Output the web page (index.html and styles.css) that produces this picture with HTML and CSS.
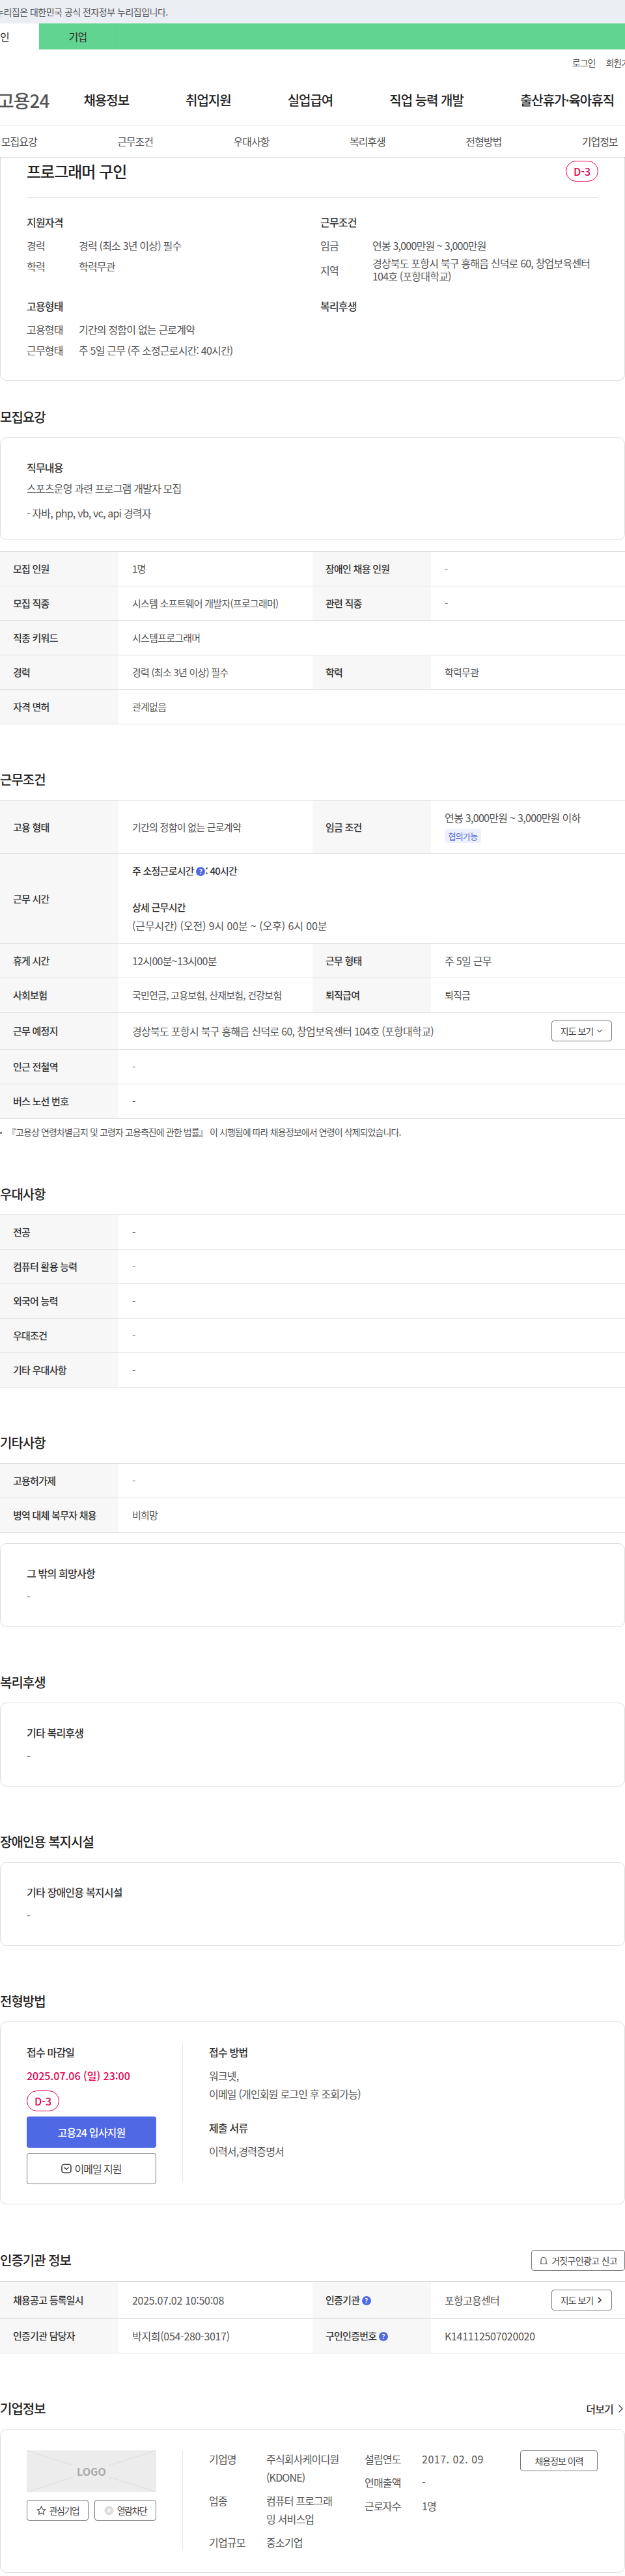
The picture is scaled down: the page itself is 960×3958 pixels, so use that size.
FILE: index.html
```html
<!DOCTYPE html>
<html lang="ko">
<head>
    <meta charset="UTF-8">
    <meta name="viewport" content="width=device-width, initial-scale=1.0">
    <title>프로그래머 구인 - 고용24</title>
    <link rel="stylesheet" href="styles.css">
</head>
<body>
    <div class="gov-bar">누리집은 대한민국 공식 전자정부 누리집입니다.</div>
    <div class="member-tabs">
        <a class="member-tab active">개인</a>
        <a class="member-tab">기업</a>
    </div>
    <div class="util-menu">
        <a>로그인</a>
        <a>회원가입</a>
    </div>
    <header class="main-nav">
        <div class="logo">고용24</div>
        <a>채용정보</a>
        <a>취업지원</a>
        <a>실업급여</a>
        <a>직업 능력 개발</a>
        <a>출산휴가·육아휴직</a>
    </header>
    <nav class="sub-nav">
        <a>모집요강</a>
        <a>근무조건</a>
        <a>우대사항</a>
        <a>복리후생</a>
        <a>전형방법</a>
        <a>기업정보</a>
    </nav>

    <div class="card summary-card">
        <div class="summary-head">
            <h1>프로그래머 구인</h1>
            <span class="d-day">D-3</span>
        </div>
        <div class="summary-grid">
            <div>
                <h3>지원자격</h3>
                <dl class="summary-list">
                    <dt>경력</dt><dd>경력 (최소 3년 이상) 필수</dd>
                    <dt>학력</dt><dd>학력무관</dd>
                </dl>
            </div>
            <div>
                <h3>근무조건</h3>
                <dl class="summary-list">
                    <dt>임금</dt><dd>연봉 3,000만원 ~ 3,000만원</dd>
                    <dt>지역</dt><dd class="two-line">경상북도 포항시 북구 흥해읍 신덕로 60, 창업보육센터 104호 (포항대학교)</dd>
                </dl>
            </div>
            <div>
                <h3>고용형태</h3>
                <dl class="summary-list">
                    <dt>고용형태</dt><dd>기간의 정함이 없는 근로계약</dd>
                    <dt>근무형태</dt><dd>주 5일 근무 (주 소정근로시간: 40시간)</dd>
                </dl>
            </div>
            <div>
                <h3>복리후생</h3>
            </div>
        </div>
    </div>

    <section class="section first">
        <h2>모집요강</h2>
        <div class="card text-card job-card">
            <h3>직무내용</h3>
            <p>스포츠운영 과련 프로그램 개발자 모집</p>
            <p class="spaced">- 자바, php, vb, vc, api 경력자</p>
        </div>
        <table class="info-table">
            <colgroup><col class="col-th"><col class="col-td"><col class="col-th"><col class="col-td"></colgroup>
            <tr><th>모집 인원</th><td>1명</td><th>장애인 채용 인원</th><td>-</td></tr>
            <tr><th>모집 직종</th><td>시스템 소프트웨어 개발자(프로그래머)</td><th>관련 직종</th><td>-</td></tr>
            <tr><th>직종 키워드</th><td colspan="3">시스템프로그래머</td></tr>
            <tr><th>경력</th><td>경력 (최소 3년 이상) 필수</td><th>학력</th><td>학력무관</td></tr>
            <tr><th>자격 면허</th><td colspan="3">관계없음</td></tr>
        </table>
    </section>

    <section class="section">
        <h2>근무조건</h2>
        <table class="info-table">
            <colgroup><col class="col-th"><col class="col-td"><col class="col-th"><col class="col-td"></colgroup>
            <tr>
                <th>고용 형태</th><td>기간의 정함이 없는 근로계약</td>
                <th>임금 조건</th>
                <td class="wide">연봉 3,000만원 ~ 3,000만원 이하<span class="tag">협의가능</span></td>
            </tr>
            <tr>
                <th>근무 시간</th>
                <td colspan="3">
                    <strong>주 소정근로시간 <span class="help">?</span>: 40시간</strong><br>
                    <br>
                    <strong>상세 근무시간</strong><br>
                    <span class="work-hours">(근무시간) (오전) 9시 00분 ~ (오후) 6시 00분</span>
                </td>
            </tr>
            <tr><th>휴게 시간</th><td class="wide">12시00분~13시00분</td><th>근무 형태</th><td class="wide">주 5일 근무</td></tr>
            <tr><th>사회보험</th><td>국민연금, 고용보험, 산재보험, 건강보험</td><th>퇴직급여</th><td>퇴직금</td></tr>
            <tr>
                <th>근무 예정지</th>
                <td colspan="3" class="wide">
                    <div class="cell-flex">
                        <span>경상북도 포항시 북구 흥해읍 신덕로 60, 창업보육센터 104호 (포항대학교)</span>
                        <a class="btn-small">지도 보기
                            <svg width="10" height="10" viewBox="0 0 10 10"><path d="M1.5 3.2 5 6.8l3.5-3.6" fill="none" stroke="#444" stroke-width="1.1"/></svg>
                        </a>
                    </div>
                </td>
            </tr>
            <tr><th>인근 전철역</th><td colspan="3">-</td></tr>
            <tr><th>버스 노선 번호</th><td colspan="3">-</td></tr>
        </table>
        <p class="note">『고용상 연령차별금지 및 고령자 고용촉진에 관한 법률』 이 시행됨에 따라 채용정보에서 연령이 삭제되었습니다.</p>
    </section>

    <section class="section">
        <h2>우대사항</h2>
        <table class="info-table">
            <colgroup><col class="col-th"><col></colgroup>
            <tr><th>전공</th><td>-</td></tr>
            <tr><th>컴퓨터 활용 능력</th><td>-</td></tr>
            <tr><th>외국어 능력</th><td>-</td></tr>
            <tr><th>우대조건</th><td>-</td></tr>
            <tr><th>기타 우대사항</th><td>-</td></tr>
        </table>
    </section>

    <section class="section">
        <h2>기타사항</h2>
        <table class="info-table">
            <colgroup><col class="col-th"><col></colgroup>
            <tr><th>고용허가제</th><td>-</td></tr>
            <tr><th>병역 대체 복무자 채용</th><td>비희망</td></tr>
        </table>
        <div class="card text-card">
            <h3>그 밖의 희망사항</h3>
            <p>-</p>
        </div>
    </section>

    <section class="section">
        <h2>복리후생</h2>
        <div class="card text-card no-gap">
            <h3>기타 복리후생</h3>
            <p>-</p>
        </div>
    </section>

    <section class="section">
        <h2>장애인용 복지시설</h2>
        <div class="card text-card no-gap">
            <h3>기타 장애인용 복지시설</h3>
            <p>-</p>
        </div>
    </section>

    <section class="section">
        <h2>전형방법</h2>
        <div class="card split-card">
            <div class="split-left">
                <h3>접수 마감일</h3>
                <div class="deadline">2025.07.06 (일) 23:00</div>
                <div><span class="d-day">D-3</span></div>
                <a class="btn-apply">고용24 입사지원</a>
                <a class="btn-mail">
                    <svg width="16" height="16" viewBox="0 0 16 16"><rect x="1" y="1.5" width="14" height="13" rx="3.5" fill="none" stroke="#333" stroke-width="1.5"/><path d="M4.6 6.2 8 9.2l3.4-3" fill="none" stroke="#333" stroke-width="1.5"/></svg>
                    이메일 지원
                </a>
            </div>
            <div class="split-right">
                <h3>접수 방법</h3>
                <p class="first-line">워크넷,</p>
                <p>이메일 (개인회원 로그인 후 조회가능)</p>
                <h3 class="second-head">제출 서류</h3>
                <p class="first-line">이력서,경력증명서</p>
            </div>
        </div>
    </section>

    <section class="section">
        <div class="section-head">
            <h2>인증기관 정보</h2>
            <a class="btn-report">
                <svg width="14" height="14" viewBox="0 0 14 14"><path d="M3 12V6.5a4 4 0 0 1 8 0V12M1 12.5h12" fill="none" stroke="#444" stroke-width="1.1"/></svg>
                거짓구인광고 신고
            </a>
        </div>
        <table class="info-table">
            <colgroup><col class="col-th"><col class="col-td"><col class="col-th"><col class="col-td"></colgroup>
            <tr>
                <th>채용공고 등록일시</th><td class="wide digits">2025.07.02 10:50:08</td>
                <th>인증기관 <span class="help">?</span></th>
                <td class="wide">
                    <div class="cell-flex">
                        <span>포항고용센터</span>
                        <a class="btn-small">지도 보기
                            <svg width="10" height="10" viewBox="0 0 10 10"><path d="M3 1.2 7 5 3 8.8" fill="none" stroke="#333" stroke-width="1.6"/></svg>
                        </a>
                    </div>
                </td>
            </tr>
            <tr>
                <th>인증기관 담당자</th><td class="wide digits">박지희(054-280-3017)</td>
                <th>구인인증번호 <span class="help">?</span></th><td class="wide digits">K141112507020020</td>
            </tr>
        </table>
    </section>

    <section class="section">
        <div class="section-head company-head">
            <h2>기업정보</h2>
            <a class="more">더보기
                <svg width="10" height="14" viewBox="0 0 10 14"><path d="M2.5 1.5 8 7l-5.5 5.5" fill="none" stroke="#333" stroke-width="1.2"/></svg>
            </a>
        </div>
        <div class="card split-card company-card">
            <div class="split-left">
                <div class="logo-box">
                    <svg class="logo-lines" width="199" height="64" viewBox="0 0 199 64"><path d="M0 0 72 23M199 0 127 23M0 64 72 41M199 64 127 41" stroke="#dcdcdc" fill="none"/></svg>
                    <span>LOGO</span>
                </div>
                <div class="company-btns">
                    <a class="btn-small">
                        <svg width="15" height="15" viewBox="0 0 15 15"><path d="m7.5 1.3 1.9 4 4.3.6-3.1 3 .8 4.4-3.9-2.1-3.9 2.1.8-4.4-3.1-3 4.3-.6z" fill="none" stroke="#444" stroke-width="1.1"/></svg>
                        관심기업
                    </a>
                    <a class="btn-small">
                        <svg width="15" height="15" viewBox="0 0 15 15"><circle cx="7.5" cy="7.5" r="7" fill="#ddd"/><path d="m5 5 5 5m0-5-5 5" stroke="#fff" stroke-width="1.2"/></svg>
                        열람차단
                    </a>
                </div>
            </div>
            <div class="split-right company-info">
                <dl class="company-list">
                    <dt>기업명</dt><dd>주식회사케이디원(KDONE)</dd>
                    <dt>업종</dt><dd>컴퓨터 프로그래밍 서비스업</dd>
                    <dt>기업규모</dt><dd>중소기업</dd>
                </dl>
                <dl class="company-list side">
                    <dt>설립연도</dt><dd class="founded">2017. 02. 09</dd>
                    <dt>연매출액</dt><dd>-</dd>
                    <dt>근로자수</dt><dd>1명</dd>
                </dl>
                <a class="btn-small btn-history">채용정보 이력</a>
            </div>
        </div>
    </section>
</body>
</html>
```

FILE: styles.css
```css
html, body {
    overflow-x: hidden;
}
body {
    margin: 0;
    width: 960px;
    font-family: "Noto Sans CJK KR", "Noto Sans", sans-serif;
    font-size: 16px;
    line-height: 28px;
    letter-spacing: -0.8px;
    color: #555;
    background-color: #fff;
}
h1, h2, h3, p, dl, dd {
    margin: 0;
}
a {
    color: inherit;
    text-decoration: none;
}

/* top bars */
.gov-bar {
    height: 36px;
    line-height: 36px;
    text-indent: -7px;
    font-size: 14px;
    letter-spacing: -0.5px;
    background-color: #ebeef3;
}
.member-tabs {
    display: flex;
    height: 40px;
    background-color: #62d491;
}
.member-tab {
    width: 119px;
    line-height: 40px;
    text-align: center;
    color: #333;
    border-right: 1px solid #58c986;
}
.member-tab.active {
    margin-left: -60px;
    background-color: #fff;
    border-right: none;
    width: 120px;
}
.util-menu {
    display: flex;
    justify-content: flex-end;
    gap: 16px;
    height: 40px;
    margin-right: -18px;
    line-height: 40px;
    font-size: 14px;
    letter-spacing: -1px;
}
.main-nav {
    display: flex;
    align-items: center;
    gap: 87px;
    height: 76px;
    border-bottom: 1px solid #eee;
    font-size: 20px;
    font-weight: 500;
    letter-spacing: -1px;
    color: #222;
}
.logo {
    margin-left: -4px;
    margin-right: -34px;
    font-size: 28px;
    color: #555;
}
.sub-nav {
    display: grid;
    grid-template-columns: repeat(6, 178.4px);
    margin-left: -60px;
    width: 1072px;
    height: 48px;
    line-height: 48px;
    text-align: center;
    position: relative;
    letter-spacing: -1px;
    background-color: #fff;
    box-shadow: 0 1px 2px rgba(0, 0, 0, 0.2);
}

/* cards */
.card {
    box-sizing: border-box;
    border: 1px solid #ddd;
    border-radius: 10px;
    background-color: #fff;
}
h3 {
    font-size: 16px;
    font-weight: 500;
    color: #333;
}
.summary-card {
    padding: 0 40px 32px;
    border-top: none;
    border-top-left-radius: 0;
    border-top-right-radius: 0;
}
.summary-head {
    display: flex;
    justify-content: space-between;
    align-items: center;
    padding: 6px 0 24px;
    border-bottom: 1px solid #e8e8e8;
}
.summary-head h1 {
    font-size: 24px;
    line-height: 32px;
    font-weight: 500;
    letter-spacing: -1px;
    color: #222;
}
.d-day {
    display: inline-block;
    box-sizing: border-box;
    width: 50px;
    height: 32px;
    line-height: 30px;
    border: 1px solid #e6004f;
    border-radius: 16px;
    text-align: center;
    font-weight: 500;
    letter-spacing: 0;
    color: #e6004f;
}
.summary-grid {
    display: grid;
    grid-template-columns: 451px 1fr;
    row-gap: 22px;
    padding-top: 23px;
}
.summary-list {
    display: grid;
    grid-template-columns: 80px 1fr;
    row-gap: 4px;
    margin-top: 8px;
    align-items: center;
}
.summary-list dd.two-line {
    line-height: 20px;
    margin-top: -1px;
}

.section {
    margin-top: 70px;
}
.section.first {
    margin-top: 41px;
}
h2 {
    font-size: 20px;
    line-height: 30px;
    font-weight: 500;
    letter-spacing: -1px;
    color: #222;
    margin-bottom: 16px;
}
.text-card {
    height: 129px;
    margin-top: 16px;
    padding: 31px 40px;
}
.text-card.no-gap {
    margin-top: 0;
}
.text-card p {
    margin-top: 8px;
}
.job-card {
    height: 158px;
    margin-top: 0;
    margin-bottom: 17px;
}
.job-card p {
    margin-top: 4px;
}
.job-card p.spaced {
    margin-top: 10px;
}

/* tables */
.info-table {
    width: 960px;
    table-layout: fixed;
    border-collapse: collapse;
    border-top: 1px solid #ddd;
}
.col-th {
    width: 182px;
}
.col-td {
    width: 298px;
}
.info-table th,
.info-table td {
    padding: 12px 20px 12px 21px;
    border-bottom: 1px solid #e2e2e2;
    text-align: left;
    vertical-align: middle;
    font-size: 15px;
    letter-spacing: -0.75px;
}
.info-table th {
    padding-left: 20px;
    padding-right: 0;
    background-color: #f7f7f7;
    font-weight: 500;
    color: #333;
}
.info-table strong {
    font-weight: 500;
    color: #333;
}
.info-table td.wide {
    font-size: 16px;
    letter-spacing: -0.7px;
}
.info-table td.digits {
    letter-spacing: -0.3px;
}
.work-hours {
    font-size: 16px;
    letter-spacing: -0.1px;
}
.cell-flex {
    display: flex;
    justify-content: space-between;
    align-items: center;
}
.tag {
    display: block;
    width: 56px;
    height: 21px;
    margin: 4px 0;
    line-height: 21px;
    border-radius: 3px;
    text-align: center;
    font-size: 13px;
    color: #4f68e3;
    background-color: #eef1fd;
}
.help {
    display: inline-block;
    width: 14px;
    height: 14px;
    line-height: 14px;
    border-radius: 50%;
    text-align: center;
    vertical-align: 1px;
    font-size: 10px;
    font-weight: 700;
    letter-spacing: 0;
    color: #fff;
    background-color: #4f68e3;
}
.note {
    position: relative;
    margin-top: 10px;
    padding-left: 11px;
    line-height: 21px;
    font-size: 14px;
    letter-spacing: -0.9px;
}
.note::before {
    content: "";
    position: absolute;
    left: 0;
    top: 10px;
    width: 3px;
    height: 3px;
    border-radius: 50%;
    background-color: #555;
}

/* buttons */
.btn-small {
    display: inline-flex;
    align-items: center;
    justify-content: center;
    gap: 5px;
    box-sizing: border-box;
    width: 93px;
    height: 32px;
    border: 1px solid #777;
    border-radius: 4px;
    font-size: 14px;
    letter-spacing: -1px;
    color: #444;
    background-color: #fff;
}
.btn-report {
    display: inline-flex;
    align-items: center;
    justify-content: center;
    gap: 5px;
    box-sizing: border-box;
    width: 144px;
    height: 32px;
    border: 1px solid #777;
    border-radius: 4px;
    font-size: 14px;
    letter-spacing: -0.7px;
    color: #444;
}
.btn-apply,
.btn-mail {
    display: flex;
    align-items: center;
    justify-content: center;
    gap: 4px;
    box-sizing: border-box;
    width: 199px;
    height: 48px;
    margin-top: 8px;
    border-radius: 4px;
}
.btn-apply {
    font-weight: 500;
    color: #fff;
    background-color: #4f68e3;
}
.btn-mail {
    border: 1px solid #777;
    letter-spacing: -1px;
    color: #444;
}

/* split cards */
.split-card {
    display: flex;
    height: 281px;
    padding: 32px 40px;
}
.split-left {
    width: 199px;
    padding-right: 40px;
    border-right: 1px solid #e8e8e8;
}
.split-right {
    flex: 1;
    padding-left: 40px;
}
.deadline {
    margin-top: 8px;
    margin-bottom: 9px;
    font-weight: 500;
    letter-spacing: 0;
    color: #e6004f;
}
.split-right .first-line {
    margin-top: 8px;
}
.second-head {
    margin-top: 24px;
}
.split-left .d-day {
    display: block;
}

.section-head {
    display: flex;
    justify-content: space-between;
    align-items: center;
    height: 32px;
    margin-bottom: 16px;
}
.section-head h2 {
    margin-bottom: 0;
}
.company-head {
    height: 30px;
}
.more {
    display: flex;
    align-items: center;
    gap: 6px;
    padding-right: 2px;
    font-weight: 500;
    color: #333;
}
.company-card {
    height: 221px;
}
.logo-box {
    position: relative;
    display: flex;
    align-items: center;
    justify-content: center;
    height: 64px;
    font-size: 16px;
    font-weight: 700;
    letter-spacing: 0;
    color: #a8a8a8;
    background-color: #ececec;
}
.logo-lines {
    position: absolute;
    left: 0;
    top: 0;
}
.logo-box span {
    position: relative;
}
.company-btns {
    display: flex;
    justify-content: space-between;
    margin-top: 12px;
}
.company-btns .btn-small {
    width: 95px;
    letter-spacing: -1.5px;
}
.company-info {
    display: flex;
}
.company-list {
    display: grid;
    grid-template-columns: 88px 113px;
    row-gap: 8px;
    align-content: start;
    margin-top: -1px;
}
.company-list dd {
    word-break: break-all;
}
.company-list.side {
    grid-template-columns: 88px 120px;
    margin-left: 38px;
}
.company-list dd.founded {
    letter-spacing: 0.5px;
}
.btn-history {
    width: 119px;
    margin-left: 31px;
}
```
